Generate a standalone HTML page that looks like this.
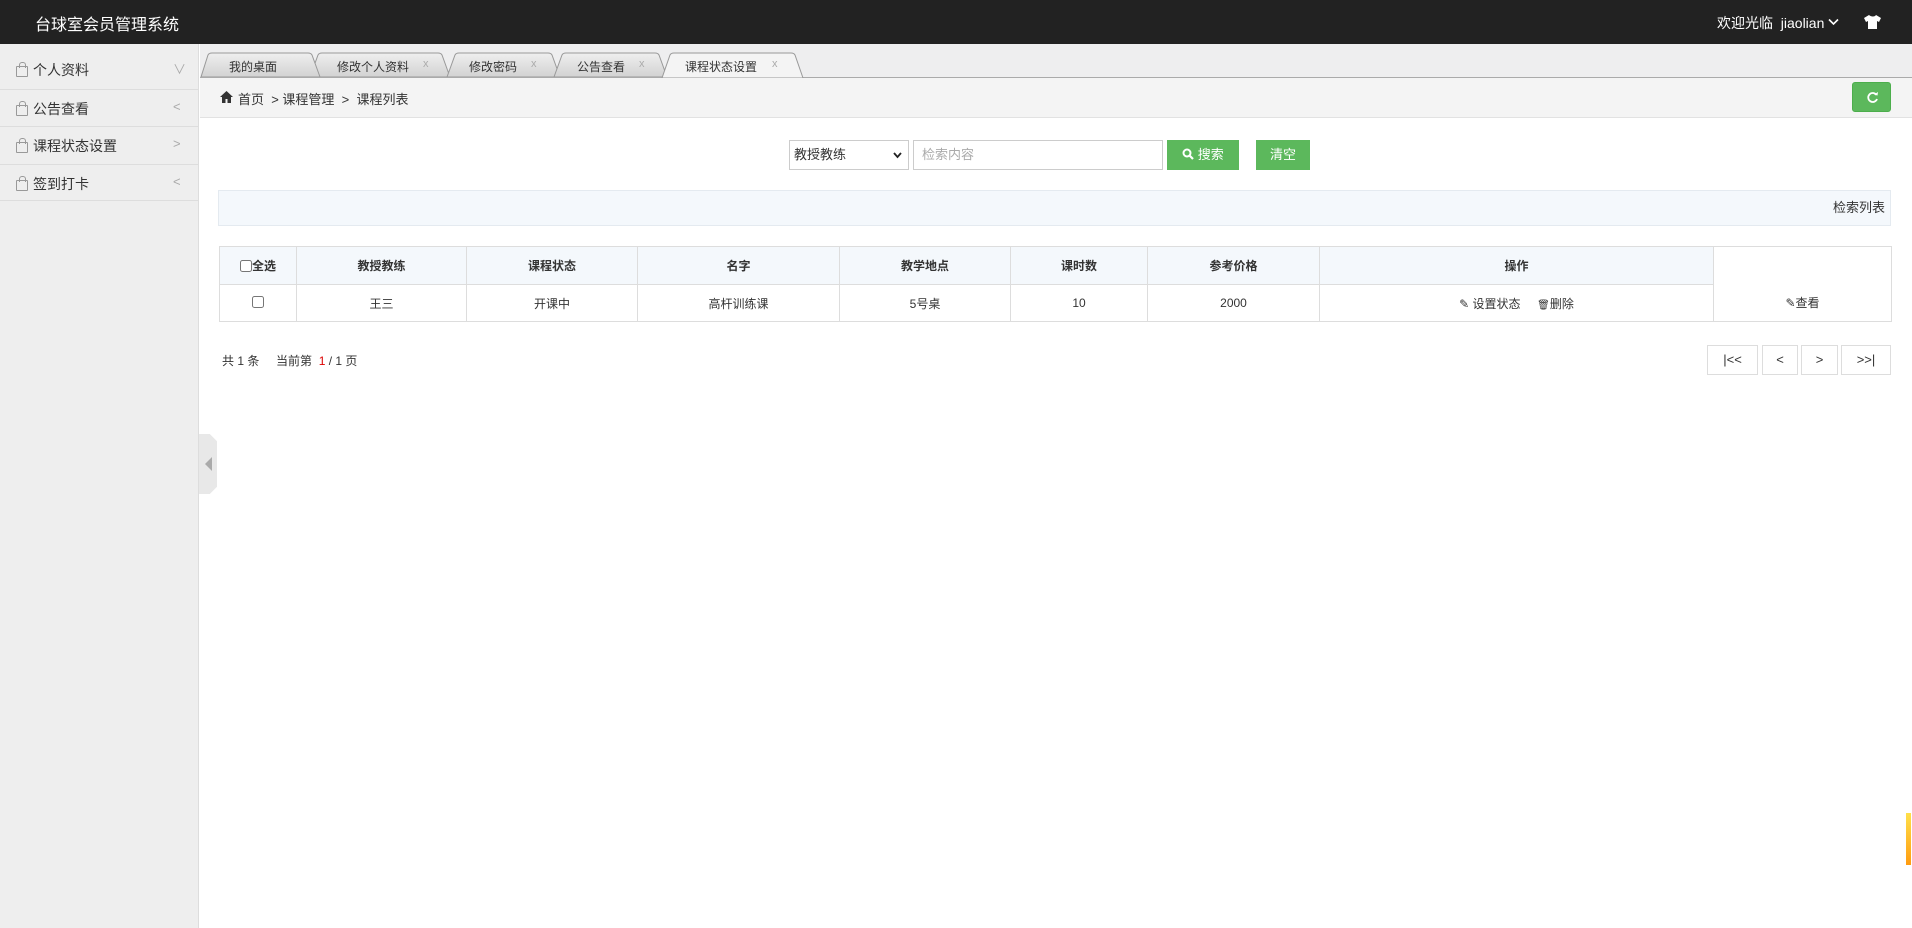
<!DOCTYPE html>
<html><head><meta charset="utf-8">
<style>
*{box-sizing:border-box;margin:0;padding:0}
body{width:1912px;height:928px;overflow:hidden;background:#fff;font-family:"Liberation Sans","Noto Sans CJK SC",sans-serif;color:#333;position:relative}
.hdr{position:absolute;left:0;top:0;width:1912px;height:44px;background:#222;color:#fff}
.hdr .t{position:absolute;left:35px;top:11px;font-size:16px}
.hdr .r{position:absolute;left:1717px;top:13px;font-size:14px}
.side{position:absolute;left:0;top:44px;width:199px;height:884px;background:#eeeeee;border-right:1px solid #ddd}
.side .it{position:absolute;left:0;width:199px;border-bottom:1px solid #ddd;font-size:14px;color:#333}
.side .it span.l{position:absolute;left:33px}
.side .it span.a{position:absolute;left:173px;color:#aaa;font-size:13px}
.bag{position:absolute;left:16px;width:12px;height:11px;border:1px solid #999;border-radius:1px}
.bag:before{content:"";position:absolute;left:2px;top:-5px;width:5px;height:5px;border:1px solid #999;border-bottom:none;border-radius:3px 3px 0 0}
.tabs{position:absolute;left:200px;top:44px;width:1712px;height:34px;background:#eeeeef}
.tl{position:absolute;top:58px;font-size:12px;color:#333}
.tx{position:absolute;top:58px;font-size:11px;color:#aaa}
.bc{position:absolute;left:200px;top:78px;width:1712px;height:40px;background:#f4f4f4;border-bottom:1px solid #e2e2e2;font-size:13px}
.rf{position:absolute;left:1852px;top:82px;width:39px;height:30px;background:#5cb85c;border-radius:3px;border:1px solid #4cae4c}
.sel{position:absolute;left:789px;top:140px;width:120px;height:30px;border:1px solid #ccc;font-size:13px;line-height:28px;padding-left:4px}
.inp{position:absolute;left:913px;top:140px;width:250px;height:30px;border:1px solid #ccc;font-size:13px;line-height:28px;padding-left:8px;color:#aaa}
.btn{position:absolute;top:140px;height:30px;background:#5cb85c;color:#fff;font-size:13px;line-height:30px;text-align:center}
.sl{position:absolute;left:218px;top:190px;width:1673px;height:36px;background:#f4f8fc;border:1px solid #e4eaf0;font-size:13px;text-align:right;line-height:34px;padding-right:5px}
table{position:absolute;left:219px;top:246px;width:1672px;border-collapse:collapse;font-size:12px;table-layout:fixed}
td{border:1px solid #ddd;text-align:center;height:37px}
tr.h td{background:#f4f8fc;font-weight:bold;height:38px}
tr.h td.e{background:#fff;border-bottom:none}
.pg{position:absolute;top:345px;height:30px;border:1px solid #ddd;font-size:13px;line-height:28px;text-align:center}
</style></head><body>
<div class="hdr"><div class="t">台球室会员管理系统</div>
<div class="r">欢迎光临&nbsp; jiaolian <svg width="11" height="8" viewBox="0 0 11 8" style="vertical-align:2px"><path d="M1 1.5l4.5 4.5 4.5-4.5" stroke="#fff" stroke-width="1.6" fill="none"/></svg></div>
<svg style="position:absolute;left:1864px;top:15px" width="17" height="14" viewBox="0 0 17 14"><path d="M5 0l-5 3 2 4 2-1v8h9V6l2 1 2-4-5-3c-1 2-5 2-7 0z" fill="#fff"/></svg>
</div>
<div class="side">
<div class="it" style="top:0;height:46px"><i class="bag" style="top:22px"></i><span class="l" style="top:16px">个人资料</span><span class="a" style="top:15px">∨</span></div>
<div class="it" style="top:46px;height:37px"><i class="bag" style="top:15px"></i><span class="l" style="top:9px">公告查看</span><span class="a" style="top:9px">&lt;</span></div>
<div class="it" style="top:83px;height:38px"><i class="bag" style="top:15px"></i><span class="l" style="top:9px">课程状态设置</span><span class="a" style="top:9px">&gt;</span></div>
<div class="it" style="top:121px;height:36px"><i class="bag" style="top:15px"></i><span class="l" style="top:9px">签到打卡</span><span class="a" style="top:9px">&lt;</span></div>
</div>
<div style="position:absolute;left:199px;top:434px;width:18px;height:60px;background:#e8e8e8;clip-path:polygon(0 0,60% 0,100% 12%,100% 88%,60% 100%,0 100%)"></div>
<div style="position:absolute;left:205px;top:457px;width:0;height:0;border-top:7px solid transparent;border-bottom:7px solid transparent;border-right:7px solid #aaa"></div>
<div class="tabs"></div>
<svg style="position:absolute;left:0;top:44px" width="1912" height="35" viewBox="0 44 1912 35">
<defs><linearGradient id="g" x1="0" y1="0" x2="0" y2="1"><stop offset="0" stop-color="#efefef"/><stop offset="1" stop-color="#d2d2d2"/></linearGradient></defs>
<path d="M450 77L442 55Q441 53 438 53L322 53Q319 53 318 55L310 77Z" fill="url(#g)" stroke="#999"/>
<path d="M560 77L552 55Q551 53 548 53L459 53Q456 53 455 55L447 77Z" fill="url(#g)" stroke="#999"/>
<path d="M667 77L659 55Q658 53 655 53L566 53Q563 53 562 55L554 77Z" fill="url(#g)" stroke="#999"/>
<path d="M320 77L312 55Q311 53 308 53L212 53Q209 53 208 55L201 77Z" fill="url(#g)" stroke="#999"/>
<path d="M200 77.5H1912" stroke="#aaa"/>
<path d="M803 78L795 55Q794 53 791 53L674 53Q671 53 670 55L662 78Z" fill="#f4f4f4" stroke="#999"/>
</svg>
<span class="tl" style="left:229px">我的桌面</span>
<span class="tl" style="left:337px">修改个人资料</span><span class="tx" style="left:423px">x</span>
<span class="tl" style="left:469px">修改密码</span><span class="tx" style="left:531px">x</span>
<span class="tl" style="left:577px">公告查看</span><span class="tx" style="left:639px">x</span>
<span class="tl" style="left:685px">课程状态设置</span><span class="tx" style="left:772px">x</span>
<div class="bc"><svg style="position:absolute;left:20px;top:13px" width="13" height="12" viewBox="0 0 13 12"><path d="M6.5 0L0 6h2v6h3.5V8h2v4H11V6h2z" fill="#333"/></svg><span style="position:absolute;left:38px;top:11px">首页 &nbsp;&gt; 课程管理 &nbsp;&gt;&nbsp; 课程列表</span></div>
<div class="rf"><svg style="position:absolute;left:13px;top:8px" width="13" height="13" viewBox="0 0 13 13"><path d="M10.5 4A4.5 4.5 0 1 0 11 8" stroke="#fff" stroke-width="1.8" fill="none"/><path d="M8 3.5l3.5 1 .5-3.5z" fill="#fff"/></svg></div>
<div class="sel">教授教练<svg style="position:absolute;right:6px;top:11px" width="9" height="7" viewBox="0 0 9 7"><path d="M1 1l3.5 4 3.5-4" stroke="#222" stroke-width="1.8" fill="none"/></svg></div>
<div class="inp">检索内容</div>
<div class="btn" style="left:1167px;width:72px"><svg width="12" height="12" viewBox="0 0 12 12" style="vertical-align:-1px"><circle cx="5" cy="5" r="3.5" stroke="#fff" stroke-width="2" fill="none"/><path d="M7.5 7.5l3.5 3.5" stroke="#fff" stroke-width="2.2"/></svg> 搜索</div>
<div class="btn" style="left:1256px;width:54px">清空</div>
<div class="sl">检索列表</div>
<table>
<colgroup><col style="width:77px"><col style="width:170px"><col style="width:171px"><col style="width:202px"><col style="width:171px"><col style="width:137px"><col style="width:172px"><col style="width:394px"><col style="width:178px"></colgroup>
<tr class="h"><td><input type="checkbox" style="vertical-align:-2px;width:12px;height:12px">全选</td><td>教授教练</td><td>课程状态</td><td>名字</td><td>教学地点</td><td>课时数</td><td>参考价格</td><td>操作</td><td class="e"></td></tr>
<tr><td><input type="checkbox" style="width:12px;height:12px"></td><td>王三</td><td>开课中</td><td>高杆训练课</td><td>5号桌</td><td>10</td><td>2000</td><td>✎ 设置状态 &nbsp;&nbsp;&nbsp; <span style="font-size:10px">🗑</span>删除</td><td style="border-top:none">✎查看</td></tr>
</table>
<div style="position:absolute;left:222px;top:352px;font-size:12px">共 1 条 &nbsp;&nbsp;&nbsp; 当前第 &nbsp;<span style="color:#d00">1</span> / 1 页</div>
<div class="pg" style="left:1707px;width:51px">|&lt;&lt;</div>
<div class="pg" style="left:1762px;width:36px">&lt;</div>
<div class="pg" style="left:1801px;width:37px">&gt;</div>
<div class="pg" style="left:1841px;width:50px">&gt;&gt;|</div>
<div style="position:absolute;left:1906px;top:813px;width:5px;height:52px;background:linear-gradient(#ffe04a,#ff9c10)"></div>
</body></html>
